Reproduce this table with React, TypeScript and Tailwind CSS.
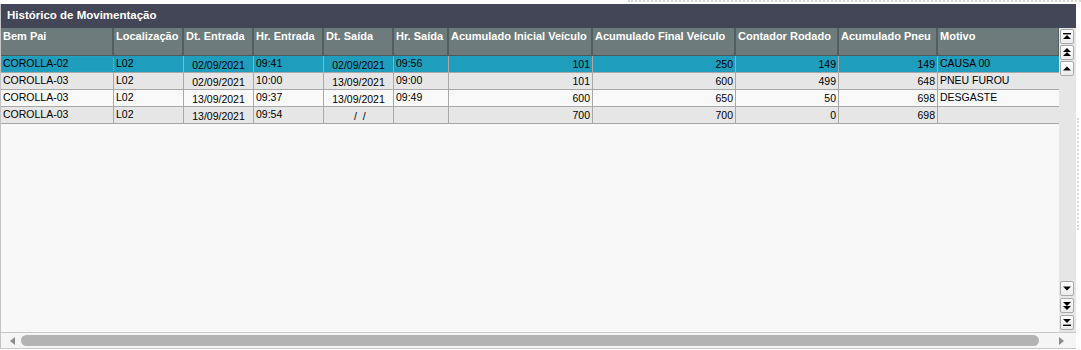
import React from "react";

const cols = [113, 70, 70, 70, 70, 55, 144, 143, 103, 99, 122];
const headers = [
  "Bem Pai",
  "Localização",
  "Dt. Entrada",
  "Hr. Entrada",
  "Dt. Saída",
  "Hr. Saída",
  "Acumulado Inicial Veículo",
  "Acumulado Final Veículo",
  "Contador Rodado",
  "Acumulado Pneu",
  "Motivo",
];
const aligns = ["l", "l", "c", "l", "c", "l", "r", "r", "r", "r", "l"];

const rows = [
  ["COROLLA-02", "L02", "02/09/2021", "09:41", "02/09/2021", "09:56", "101", "250", "149", "149", "CAUSA 00"],
  ["COROLLA-03", "L02", "02/09/2021", "10:00", "13/09/2021", "09:00", "101", "600", "499", "648", "PNEU FUROU"],
  ["COROLLA-03", "L02", "13/09/2021", "09:37", "13/09/2021", "09:49", "600", "650", "50", "698", "DESGASTE"],
  ["COROLLA-03", "L02", "13/09/2021", "09:54", " /  /", "", "700", "700", "0", "698", ""],
];
const rowBg = ["bg-[#1e9dbd]", "bg-[#e6e6e6]", "bg-[#f9f9f9]", "bg-[#e6e6e6]"];

function Btn({ kind }: { kind: string }) {
  return (
    <div className="w-[14px] h-[15px] ml-[1px] rounded-[2px] border border-[#a9a9a9] bg-gradient-to-b from-white to-[#ececec] flex items-center justify-center">
      <svg width="8" height="9" viewBox="0 0 8 9">
        {kind === "top" && (
          <>
            <rect x="0" y="1" width="8" height="1.4" fill="#000" />
            <polygon points="4,3 8,7 0,7" fill="#000" />
          </>
        )}
        {kind === "pgup" && (
          <>
            <polygon points="4,0 8,4 0,4" fill="#000" />
            <polygon points="4,4 8,8 0,8" fill="#000" />
          </>
        )}
        {kind === "up" && <polygon points="4,2.5 8,6.5 0,6.5" fill="#000" />}
        {kind === "down" && <polygon points="0,2.5 8,2.5 4,6.5" fill="#000" />}
        {kind === "pgdn" && (
          <>
            <polygon points="0,1 8,1 4,5" fill="#000" />
            <polygon points="0,5 8,5 4,9" fill="#000" />
          </>
        )}
        {kind === "bottom" && (
          <>
            <polygon points="0,1 8,1 4,5" fill="#000" />
            <rect x="0" y="6.6" width="8" height="1.4" fill="#000" />
          </>
        )}
      </svg>
    </div>
  );
}

export default function App() {
  const gridCols = "grid grid-cols-[113px_70px_70px_70px_70px_55px_144px_143px_103px_99px_122px]";
  return (
    <div className="w-[1081px] h-[350px] bg-white relative overflow-hidden" style={{ fontFamily: '"Liberation Sans", Arial, sans-serif' }}>
      {/* decorative dotted lines */}
      <div className="absolute top-0 left-[628px] right-0 h-[2px] border-t-2 border-dotted border-[#d6d6d6]" />
      <div className="absolute top-[118px] left-[1077px] h-[112px] w-[2px] border-l-2 border-dotted border-[#d6d6d6]" />

      <div className="absolute left-0 top-[4px] w-[1076px] h-[345px] flex flex-col border-l border-[#c4c4c4]">
        {/* title */}
        <div className="h-[24px] bg-[#434656] flex items-center pl-[6px] shrink-0">
          <span className="text-white font-bold text-[11.5px] leading-none">Histórico de Movimentação</span>
        </div>

        {/* grid + vscroll */}
        <div className="flex h-[304px] shrink-0">
          <div className="w-[1058px] bg-[#f8f8f8] flex flex-col">
            <div className={`${gridCols} h-[28px] bg-[#6e7b7c] border-b border-[#4f5859]`}>
              {headers.map((h, i) => (
                <div
                  key={i}
                  className="border-r-2 border-[#555e5f] pl-[2px] pt-[2px] text-white font-bold text-[11px] leading-[13px] whitespace-nowrap overflow-hidden"
                >
                  {h}
                </div>
              ))}
            </div>
            {rows.map((r, ri) => (
              <div key={ri} className={`${gridCols} h-[17px] ${rowBg[ri]} border-b border-[#a8a8a8]`}>
                {r.map((c, ci) => {
                  const a = aligns[ci];
                  const focus = ri === 0 && ci === 0;
                  return (
                    <div
                      key={ci}
                      className={`border-r border-[#a8a8a8] text-black text-[10.5px] whitespace-pre overflow-hidden ${
                        a === "r"
                          ? "text-right pr-[2px] leading-[16px]"
                          : a === "c"
                          ? "text-center pt-[2px] leading-[15px]"
                          : "pl-[2px] leading-[15px]"
                      } ${focus ? "outline outline-1 outline-dotted outline-[#f05a28] -outline-offset-1" : ""}`}
                    >
                      {c}
                    </div>
                  );
                })}
              </div>
            ))}
          </div>
          <div className="w-[17px] bg-[#e6e6e6] flex flex-col justify-between pt-[1px] pb-[2px]">
            <div className="flex flex-col gap-[1px]">
              <Btn kind="top" />
              <Btn kind="pgup" />
              <Btn kind="up" />
            </div>
            <div className="flex flex-col gap-[2px]">
              <Btn kind="down" />
              <Btn kind="pgdn" />
              <Btn kind="bottom" />
            </div>
          </div>
        </div>

        {/* hscroll */}
        <div className="h-[17px] border-t border-b border-[#c8c8c8] bg-[#f5f5f5] flex items-center shrink-0">
          <div className="w-[20px] flex justify-center pl-[2px]">
            <svg width="5" height="8" viewBox="0 0 5 8">
              <polygon points="5,0 5,8 0,4" fill="#8c8c8c" />
            </svg>
          </div>
          <div className="w-[1018px] h-[11px] rounded-full bg-[#b3b3b3]" />
          <div className="flex-1 flex justify-center pl-[8px]">
            <svg width="5" height="8" viewBox="0 0 5 8">
              <polygon points="0,0 5,4 0,8" fill="#8c8c8c" />
            </svg>
          </div>
        </div>
      </div>
    </div>
  );
}
